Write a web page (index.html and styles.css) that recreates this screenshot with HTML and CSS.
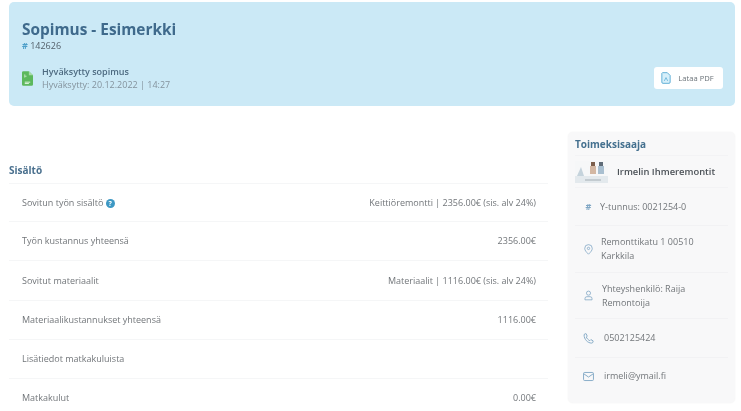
FILE: index.html
```html
<!DOCTYPE html>
<html lang="fi">
<head>
<meta charset="utf-8">
<title>Sopimus - Esimerkki</title>
<link rel="stylesheet" href="styles.css">
</head>
<body>
<header class="hero">
  <div class="hero-main">
    <h1 class="hero-title">Sopimus - Esimerkki</h1>
    <div class="hero-id"><span class="hash">#</span> 142626</div>
    <div class="status">
      <svg class="status-icon" viewBox="0 0 12 16" aria-hidden="true">
        <path d="M1.5 0H7.5L12 4.5V14.5A1.5 1.5 0 0 1 10.5 16H1.5A1.5 1.5 0 0 1 0 14.5V1.5A1.5 1.5 0 0 1 1.5 0Z" fill="#5cb85c"/>
        <path d="M7.5 0V4.5H12Z" fill="#a8dca8"/>
        <path d="M3 7V3.5M5 5.5H3" stroke="#d8f0d8" stroke-width=".8" fill="none"/>
        <path d="M3 12H9M3 13.5H7.5" stroke="#e6f6e6" stroke-width="1" fill="none"/>
      </svg>
      <div class="status-text">
        <div class="status-title">Hyväksytty sopimus</div>
        <div class="status-date">Hyväksytty: 20.12.2022 | 14:27</div>
      </div>
    </div>
  </div>
  <button class="pdf-btn" type="button">
    <svg class="pdf-icon" viewBox="0 0 12 14" aria-hidden="true">
      <path d="M1.8.6H7.6L11 4V12A1.4 1.4 0 0 1 9.6 13.4H2.4A1.4 1.4 0 0 1 1 12V1.4Z" fill="#d6effa" stroke="#4aa3d0" stroke-width="1"/>
      <path d="M4 10.5L6 6.5L8 10.5" fill="none" stroke="#4aa3d0" stroke-width=".8"/>
    </svg>
    Lataa PDF
  </button>
</header>

<div class="columns">
  <main class="content">
    <h2 class="section-title">Sisältö</h2>
    <div class="row row-short">
      <div class="row-label">Sovitun työn sisältö <span class="help">?</span></div>
      <div class="row-value">Keittiöremontti | 2356.00€ (sis. alv 24%)</div>
    </div>
    <div class="row">
      <div class="row-label">Työn kustannus yhteensä</div>
      <div class="row-value">2356.00€</div>
    </div>
    <div class="row row-tall">
      <div class="row-label">Sovitut materiaalit</div>
      <div class="row-value">Materiaalit | 1116.00€ (sis. alv 24%)</div>
    </div>
    <div class="row">
      <div class="row-label">Materiaalikustannukset yhteensä</div>
      <div class="row-value">1116.00€</div>
    </div>
    <div class="row">
      <div class="row-label">Lisätiedot matkakuluista</div>
      <div class="row-value"></div>
    </div>
    <div class="row">
      <div class="row-label">Matkakulut</div>
      <div class="row-value">0.00€</div>
    </div>
  </main>

  <aside class="side">
    <h3 class="side-title">Toimeksisaaja</h3>
    <div class="company">
      <svg class="company-logo" viewBox="0 0 33 22" aria-hidden="true">
        <rect width="33" height="22" fill="#f6f7f8"/>
        <rect x="0" y="15" width="33" height="7" fill="#e3e9ed"/>
        <path d="M2 15L6 6L9 15Z" fill="#c5d3dc"/>
        <rect x="16" y="1" width="4" height="4" fill="#7d5f4c"/>
        <rect x="15" y="5" width="6" height="8" fill="#d3b7a3"/>
        <rect x="24" y="1" width="4" height="4" fill="#5f6c78"/>
        <rect x="23" y="5" width="6" height="8" fill="#a9bfd0"/>
        <path d="M10 19H26" stroke="#a3adb4" stroke-width="1"/>
      </svg>
      <span class="company-name">Irmelin Ihmeremontit</span>
    </div>
    <div class="info info-id">
      <span class="info-icon hash-icon">#</span>
      <span class="info-text">Y-tunnus: 0021254-0</span>
    </div>
    <div class="info info-address">
      <svg class="info-icon" viewBox="0 0 12 14" aria-hidden="true"><path d="M6 13C3 10 1.2 8 1.2 5.6A4.8 4.8 0 0 1 10.8 5.6C10.8 8 9 10 6 13Z" fill="none" stroke="#7fa6c4" stroke-width="1"/><circle cx="6" cy="5.6" r="1.5" fill="none" stroke="#7fa6c4" stroke-width="1"/></svg>
      <span class="info-text">Remonttikatu 1 00510 Karkkila</span>
    </div>
    <div class="info info-contact">
      <svg class="info-icon" viewBox="0 0 12 14" aria-hidden="true"><circle cx="6" cy="4" r="2.6" fill="none" stroke="#7fa6c4" stroke-width="1"/><path d="M1.5 12.5V11A2.5 2.5 0 0 1 4 8.5H8A2.5 2.5 0 0 1 10.5 11V12.5Z" fill="none" stroke="#7fa6c4" stroke-width="1"/></svg>
      <span class="info-text">Yhteyshenkilö: Raija Remontoija</span>
    </div>
    <div class="info info-line">
      <svg class="info-icon" viewBox="0 0 12 12" aria-hidden="true"><path d="M1.2 2.2C1.2 1.4 1.8.8 2.6.8H3.4L4.6 3.4L3.6 4.4C4.2 6 5.8 7.6 7.4 8.4L8.6 7.2L11 8.6V9.4C11 10.4 10.2 11 9.4 11C5 11 1.2 6.8 1.2 2.2Z" fill="none" stroke="#7fa6c4" stroke-width="1"/></svg>
      <span class="info-text">0502125424</span>
    </div>
    <div class="info info-line info-last">
      <svg class="info-icon" viewBox="0 0 12 10" aria-hidden="true"><rect x=".6" y=".6" width="10.8" height="8.8" rx="1.2" fill="none" stroke="#7fa6c4" stroke-width="1"/><path d="M.8 2L6 5.6L11.2 2" fill="none" stroke="#7fa6c4" stroke-width="1"/></svg>
      <span class="info-text">irmeli@ymail.fi</span>
    </div>
  </aside>
</div>
</body>
</html>
```

FILE: styles.css
```css
* { box-sizing: border-box; }

html, body {
  margin: 0;
  height: 411px;
  overflow: hidden;
  background: #fff;
}

body {
  padding: 2px 6px 0 9px;
  font-family: "Open Sans", "Liberation Sans", sans-serif;
  font-size: 9px;
  color: #5f6368;
  filter: blur(.3px);
}

.hero {
  height: 104px;
  background: #cbe9f6;
  border-radius: 5px;
  padding: 18px 12px 0 13px;
  display: flex;
  justify-content: space-between;
  align-items: flex-start;
}

.hero-title {
  margin: 0;
  font-size: 15.4px;
  line-height: 19px;
  font-weight: 700;
  color: #3f6a8c;
}

.hero-id {
  margin-top: 1px;
  line-height: 12px;
  color: #54616b;
}

.hash { color: #4d9fc9; font-weight: 700; }

.status {
  margin-top: 13px;
  display: flex;
  align-items: center;
  gap: 9px;
}

.status-icon { width: 11px; height: 15px; }

.status-title {
  line-height: 13px;
  font-weight: 600;
  color: #4d6a80;
}

.status-date {
  line-height: 13px;
  color: #84939d;
}

.pdf-btn {
  margin-top: 47px;
  width: 69px;
  height: 22px;
  border: 0;
  border-radius: 3px;
  background: #fff;
  font: 400 7.6px "Open Sans", sans-serif;
  color: #6b7379;
  display: flex;
  align-items: center;
  justify-content: center;
  gap: 7px;
  padding: 0 2px 0 0;
}

.pdf-icon { width: 10px; height: 12px; }

.columns {
  margin-top: 26px;
  display: flex;
  justify-content: space-between;
  align-items: flex-start;
}

.content {
  width: 539px;
  padding-top: 25px;
}

.section-title {
  margin: 0;
  font-size: 10px;
  line-height: 26px;
  font-weight: 700;
  color: #4a708e;
}

.row {
  height: 39px;
  padding: 0 12px 1px 13px;
  border-top: 1px solid #f5f6f7;
  display: flex;
  justify-content: space-between;
  align-items: center;
  color: #72767a;
}

.row-short { height: 38px; }
.row-tall { height: 40px; }

.help {
  display: inline-block;
  width: 9px;
  height: 9px;
  border-radius: 50%;
  background: #3d98c4;
  color: #fff;
  font-size: 7px;
  line-height: 9px;
  font-weight: 700;
  text-align: center;
  vertical-align: 0;
}

.side {
  width: 167px;
  height: 271px;
  background: #f8f8f9;
  border-radius: 5px;
  padding: 2px 7px 0 7px;
  box-shadow: 0 0 2px rgba(0, 0, 0, .06);
}

.side-title {
  margin: 0;
  font-size: 10px;
  line-height: 21px;
  font-weight: 700;
  color: #44708f;
}

.company {
  height: 33px;
  display: flex;
  align-items: center;
  gap: 9px;
  border-top: 1px solid #f3f3f5;
  border-bottom: 1px solid #f3f3f5;
}

.company-logo { width: 33px; height: 22px; }

.company-name {
  font-size: 9.4px;
  font-weight: 600;
  color: #4b5157;
}

.info {
  display: flex;
  align-items: center;
  padding: 0 8px 0 8px;
  color: #72767a;
  line-height: 14px;
  border-bottom: 1px solid #f2f2f4;
}

.info-id { height: 38px; gap: 6px; }
.info-address { height: 47px; gap: 7px; }
.info-contact { height: 46px; gap: 8px; }
.info-line { height: 39px; gap: 10px; }
.info-last { height: 36px; border-bottom: 0; }

.info-icon {
  flex: none;
  width: 11px;
  height: 11px;
  text-align: center;
}

.hash-icon {
  color: #7fa6c4;
  font-weight: 700;
  line-height: 11px;
}
```
